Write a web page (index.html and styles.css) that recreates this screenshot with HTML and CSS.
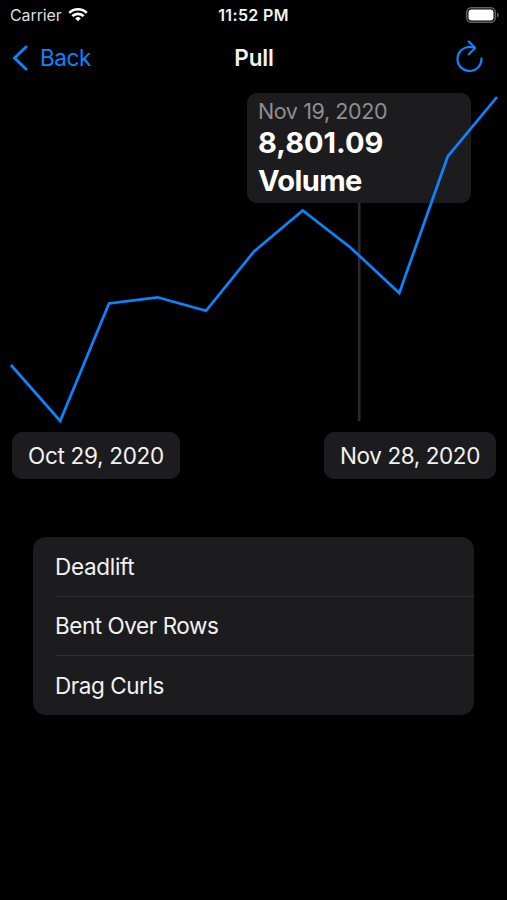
FILE: index.html
```
<!DOCTYPE html>
<html lang="en">
<head>
<meta charset="utf-8">
<title>Pull</title>
<link rel="stylesheet" href="styles.css">
</head>
<body>
<header>
  <div class="status">
    <div class="carrier"><span>Carrier</span>
      <svg class="wifi" width="20" height="15" viewBox="0 0 22 16" fill="none" stroke="#fff" stroke-width="3"><path d="M1.400 6.200a13.600 13.600 0 0 1 19.200 0"/><path d="M4.800 9.800a8.800 8.800 0 0 1 12.400 0"/><path d="M11 15.500l-3.100-3.100a4.400 4.400 0 0 1 6.200 0z" fill="#fff" stroke="none"/></svg>
    </div>
    <time class="clock">11:52 PM</time>
    <svg class="battery" width="33" height="17" viewBox="0 0 33 17"><rect x=".75" y=".75" width="28.500" height="14.500" rx="4.500" fill="none" stroke="#626262" stroke-width="1.500"/><rect x="2.500" y="2.500" width="25" height="11" rx="3" fill="#fff"/><path d="M31 5.500q1.800.7 1.800 2.500T31 10.500z" fill="#626262"/></svg>
  </div>
  <nav class="nav">
    <a class="back"><svg width="16" height="26" viewBox="0 0 16 26" fill="none" stroke="#0a84ff" stroke-width="3" stroke-linecap="round" stroke-linejoin="round"><path d="M14 2L2.500 13 14 24"/></svg><span>Back</span></a>
    <h1>Pull</h1>
    <svg class="refresh" width="28" height="32" viewBox="0 0 28 32" fill="none" stroke="#0a84ff" stroke-width="2.200" stroke-linecap="round" stroke-linejoin="round"><path d="M25.500 18.500a12 12 0 1 1-12-11.500q2.800 0 4.800.8"/><path d="M12.800 1.500l6.300 6.500-6.300 6.300"/></svg>
  </nav>
</header>
<main>
  <section class="chart">
    <div class="tooltip">
      <span class="date">Nov 19, 2020</span>
      <strong>8,801.09</strong>
      <strong class="unit">Volume</strong>
    </div>
    <svg class="plot" width="507" height="340" viewBox="0 90 507 340" fill="none"><path d="M359.200 203V421" stroke="#2a2a2c" stroke-width="2.700"/><path d="M11 365L60.200 421 109 303.500 157.500 297.300 206 310.800 254 251.500 302.700 210.500 351 248 399.300 293 447.700 156.500 497 97" stroke="#0a84ff" stroke-width="2.700" stroke-linejoin="miter"/></svg>
    <div class="range"><span class="start">Oct 29, 2020</span><span class="end">Nov 28, 2020</span></div>
  </section>
  <ul class="list">
    <li><span class="deadlift">Deadlift</span></li>
    <li><span class="rows">Bent Over Rows</span></li>
    <li><span class="curls">Drag Curls</span></li>
  </ul>
</main>
</body>
</html>
```
FILE: styles.css
```
* { box-sizing: border-box; }
body {
  margin: 0;
  height: 900px;
  overflow: hidden;
  background: #000;
  color: #f2f2f2;
  font: 22.5px/28px Inter, "Liberation Sans", sans-serif;
}
.status {
  height: 30px;
  padding: 0 8px 0 10px;
  display: grid;
  grid-template-columns: 1fr auto 1fr;
  align-items: center;
  font-size: 16px;
  line-height: 20px;
}
.carrier { display: flex; align-items: center; gap: 6px; color: #ddd; }
.carrier span { letter-spacing: -.1px; }
.wifi { margin-top: -2px; }
.clock { font-weight: 600; letter-spacing: .35px; margin: 0 1px 0 -1px; }
.battery { justify-self: end; }
.nav {
  height: 60px;
  padding: 0 23px 4px 12px;
  display: grid;
  grid-template-columns: 1fr auto 1fr;
  align-items: center;
}
.back { display: flex; align-items: center; gap: 12px; color: #0a84ff; }
.back span { letter-spacing: -.4px; }
h1 { margin: 0 -12px 0 0; font-size: 22.500px; font-weight: 600; letter-spacing: -.2px; }
.refresh { justify-self: end; margin-top: -5px; }
.chart { position: relative; height: 389px; }
.plot { position: relative; display: block; }
.tooltip {
  position: absolute;
  left: 247px;
  top: 3px;
  width: 224px;
  height: 110px;
  padding: 4px 11px;
  border-radius: 10px;
  background: #1c1c1e;
  display: flex;
  flex-direction: column;
}
.date { color: #8e8e93; font-size: 21.500px; letter-spacing: -.4px; }
.tooltip strong { margin-top: -1px; color: #fff; font-size: 29px; line-height: 38px; font-weight: 700; }
.tooltip .unit { margin-top: 0; letter-spacing: -.6px; }
.range { display: flex; justify-content: space-between; padding: 2px 11px 0 12px; }
.range span {
  height: 47px;
  padding: 0 16px;
  border-radius: 10px;
  background: #1c1c1e;
  line-height: 47px;
  letter-spacing: -.4px;
  white-space: nowrap;
}
.range .start { width: 168px; letter-spacing: -.3px; }
.range .end { width: 172px; }
.list {
  list-style: none;
  width: 441px;
  height: 178px;
  margin: 58px 0 0 33px;
  padding: 0 0 0 22px;
  border-radius: 13px;
  background: #1c1c1e;
  overflow: hidden;
}
.list li { height: 59px; line-height: 59px; letter-spacing: -.45px; }
.list li + li { border-top: 1px solid #303032; line-height: 57px; }
.list li:last-child { line-height: 59px; }
.list .deadlift { letter-spacing: -.3px; }
```
